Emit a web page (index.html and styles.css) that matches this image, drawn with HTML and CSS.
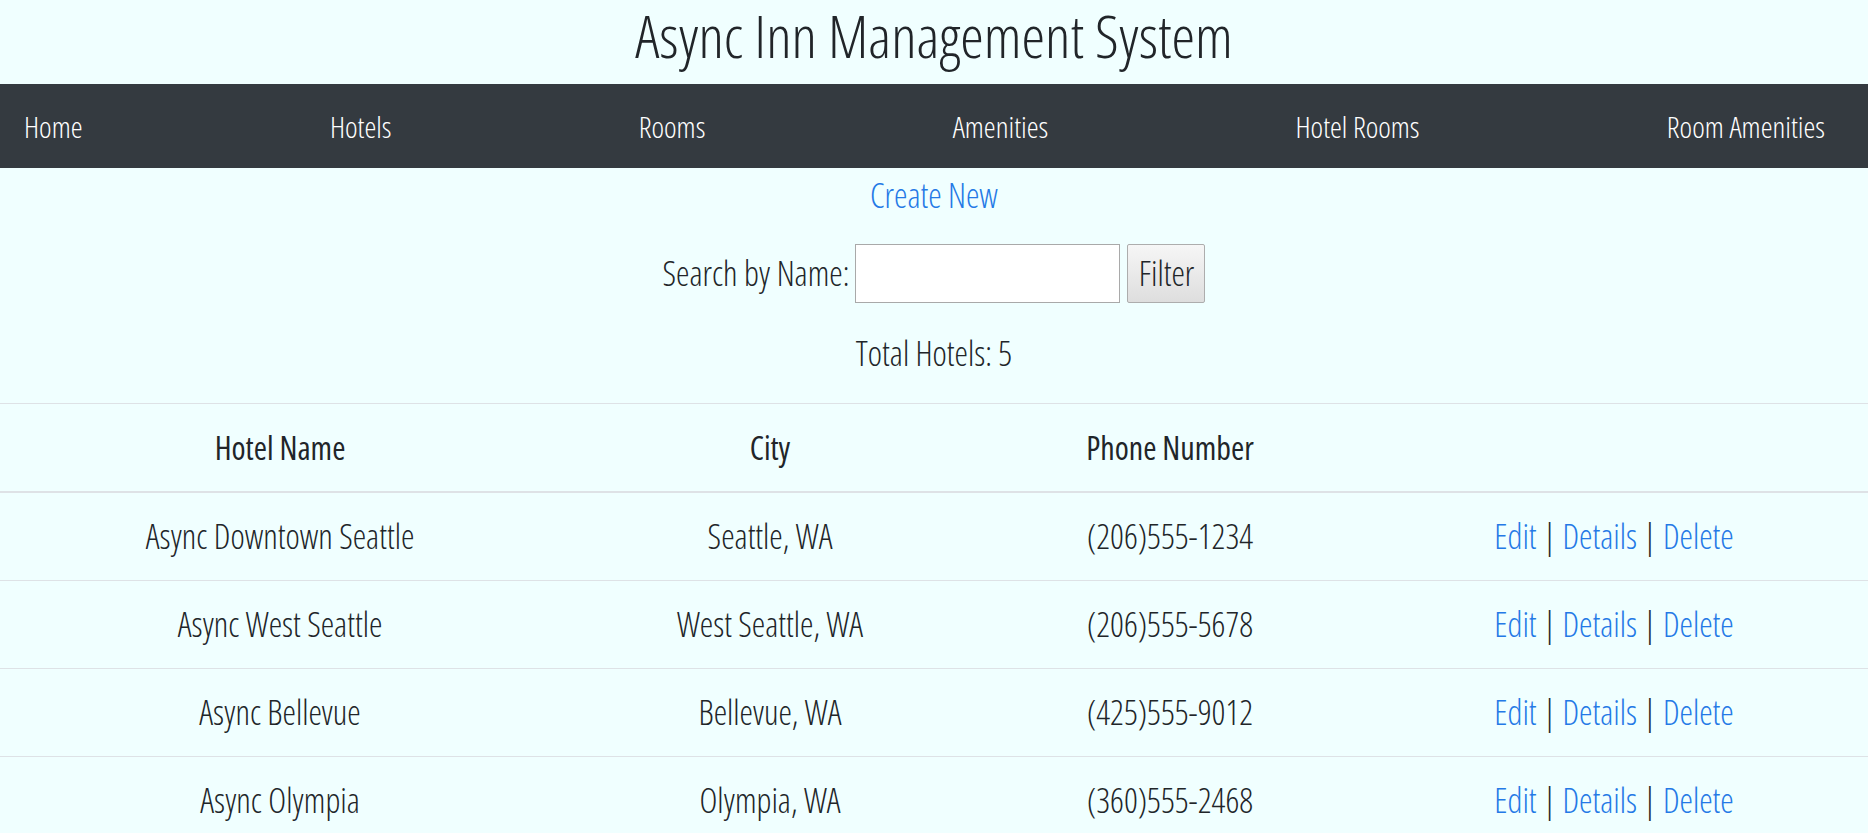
FILE: index.html
```html
<!DOCTYPE html>
<html lang="en">
<head>
<meta charset="utf-8">
<title>Async Inn Management System</title>
<link rel="stylesheet" href="styles.css">
</head>
<body>
<header class="site-header">
  <h1 class="site-title">Async Inn Management System</h1>
  <nav class="main-nav">
    <a class="nav-link" href="#">Home</a>
    <a class="nav-link" href="#">Hotels</a>
    <a class="nav-link" href="#">Rooms</a>
    <a class="nav-link" href="#">Amenities</a>
    <a class="nav-link" href="#">Hotel Rooms</a>
    <a class="nav-link" href="#">Room Amenities</a>
  </nav>
</header>
<main class="content">
  <p class="create-row"><a class="link" href="#">Create New</a></p>
  <form class="search-row">
    <label class="search-label" for="search">Search by Name:</label>
    <input class="search-input" id="search" type="text">
    <button class="filter-btn" type="button">Filter</button>
  </form>
  <p class="total">Total Hotels: 5</p>
  <table class="hotel-table">
    <colgroup>
      <col class="col-name">
      <col class="col-city">
      <col class="col-phone">
      <col class="col-actions">
    </colgroup>
    <thead>
      <tr>
        <th>Hotel Name</th>
        <th>City</th>
        <th>Phone Number</th>
        <th></th>
      </tr>
    </thead>
    <tbody>
      <tr>
        <td>Async Downtown Seattle</td>
        <td>Seattle, WA</td>
        <td>(206)555-1234</td>
        <td><a class="link" href="#">Edit</a> | <a class="link" href="#">Details</a> | <a class="link" href="#">Delete</a></td>
      </tr>
      <tr>
        <td>Async West Seattle</td>
        <td>West Seattle, WA</td>
        <td>(206)555-5678</td>
        <td><a class="link" href="#">Edit</a> | <a class="link" href="#">Details</a> | <a class="link" href="#">Delete</a></td>
      </tr>
      <tr>
        <td>Async Bellevue</td>
        <td>Bellevue, WA</td>
        <td>(425)555-9012</td>
        <td><a class="link" href="#">Edit</a> | <a class="link" href="#">Details</a> | <a class="link" href="#">Delete</a></td>
      </tr>
      <tr>
        <td>Async Olympia</td>
        <td>Olympia, WA</td>
        <td>(360)555-2468</td>
        <td><a class="link" href="#">Edit</a> | <a class="link" href="#">Details</a> | <a class="link" href="#">Delete</a></td>
      </tr>
      <tr>
        <td>Async Tacoma</td>
        <td>Tacoma, WA</td>
        <td>(253)555-1357</td>
        <td><a class="link" href="#">Edit</a> | <a class="link" href="#">Details</a> | <a class="link" href="#">Delete</a></td>
      </tr>
    </tbody>
  </table>
</main>
</body>
</html>
```
FILE: styles.css
```css
html, body {
  margin: 0;
  padding: 0;
}
body {
  background: #f0ffff;
  color: #212529;
  font-family: "Open Sans", "Liberation Sans", sans-serif;
  font-stretch: 75%;
  font-weight: 300;
  font-size: 34px;
  line-height: 45px;
}
.site-title {
  margin: 0 0 14px 0;
  font-size: 59.5px;
  font-weight: 300;
  line-height: 70px;
  text-align: center;
  color: #212529;
}
.main-nav {
  display: flex;
  justify-content: space-between;
  background: #343a40;
  padding: 20px 43px 19px 24px;
  font-size: 30px;
}
.nav-link {
  color: #ffffff;
  text-decoration: none;
}
.content {
  display: flex;
  flex-direction: column;
  align-items: center;
}
.create-row {
  margin: 5px 0 0 0;
}
.link {
  color: #2479e6;
  text-decoration: none;
}
.search-row {
  display: flex;
  align-items: center;
  margin: 26px 0 0 0;
}
.search-label {
  margin-right: 6px;
}
.search-input {
  box-sizing: border-box;
  width: 265px;
  height: 59px;
  margin: 0;
  border: 1px solid #a9a9a9;
  background: #ffffff;
  font: inherit;
}
.filter-btn {
  box-sizing: border-box;
  width: 78px;
  height: 59px;
  margin: 0 0 0 7px;
  padding: 0;
  border: 1px solid #adadad;
  border-radius: 2px;
  background: linear-gradient(#f6f6f6, #dedede);
  color: #212529;
  font: inherit;
  line-height: 45px;
}
.total {
  margin: 28px 0 27px 0;
}
.hotel-table {
  width: 100%;
  border-collapse: collapse;
  table-layout: fixed;
}
.col-name { width: 560px; }
.col-city { width: 420px; }
.col-phone { width: 380px; }
.col-actions { width: 508px; }
.hotel-table th,
.hotel-table td {
  padding: 21px;
  text-align: center;
  border-top: 1px solid #dee2e6;
  white-space: nowrap;
}
.hotel-table th {
  font-size: 32px;
  font-weight: 500;
  border-bottom: 2px solid #dee2e6;
}
.hotel-table thead th {
  vertical-align: bottom;
}
```
